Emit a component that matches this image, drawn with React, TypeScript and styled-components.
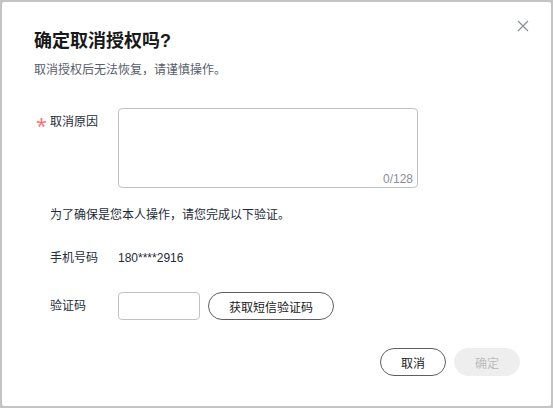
import styled, { createGlobalStyle } from 'styled-components';

const GlobalStyle = createGlobalStyle`
  html, body {
    margin: 0;
    padding: 0;
    background: #c4c4c4;
  }
  body {
    font-family: "Liberation Sans", "Noto Sans CJK SC", sans-serif;
    color: #191919;
  }
`;

const Dialog = styled.section`
  position: relative;
  box-sizing: border-box;
  width: 549px;
  height: 404px;
  margin: 2px;
  padding: 27px 31px 0 32px;
  background: #fff;
  border-radius: 2px;
`;

const CloseButton = styled.button`
  position: absolute;
  top: 17px;
  right: 21px;
  width: 14px;
  height: 14px;
  padding: 0;
  border: 0;
  background: none;
  cursor: pointer;
  display: flex;
  align-items: center;
  justify-content: center;
`;

const Title = styled.h1`
  margin: 0;
  font-size: 18px;
  line-height: 24px;
  font-weight: bold;
  color: #191919;
`;

const Subtitle = styled.p`
  margin: 8px 0 0;
  font-size: 12px;
  line-height: 18px;
  color: #575d6c;
`;

const Form = styled.div`
  display: flex;
  flex-direction: column;
  margin-top: 29px;
`;

const Row = styled.div<{ $gap?: number; $center?: boolean }>`
  display: flex;
  align-items: ${p => (p.$center ? 'center' : 'flex-start')};
  margin-top: ${p => p.$gap ?? 0}px;
`;

const Label = styled.div<{ $top?: number }>`
  box-sizing: border-box;
  width: 84px;
  flex: none;
  padding-left: 16px;
  padding-top: ${p => p.$top ?? 0}px;
  font-size: 12px;
  line-height: 18px;
  color: #252b3a;
`;

const Star = styled.span`
  display: inline-block;
  box-sizing: border-box;
  width: 14px;
  height: 18px;
  margin-left: -14px;
  padding-top: 4px;
  color: #f66f6a;
  font-family: "Open Sans", sans-serif;
  font-size: 20px;
  line-height: 18px;
  vertical-align: top;
`;

const Value = styled.div`
  font-size: 12px;
  line-height: 18px;
  color: #252b3a;
`;

const Note = styled.div<{ $gap?: number }>`
  margin-top: ${p => p.$gap ?? 0}px;
  padding-left: 16px;
  font-size: 12px;
  line-height: 18px;
  color: #252b3a;
`;

const AreaWrap = styled.div`
  position: relative;
  width: 300px;
  height: 80px;
`;

const TextArea = styled.textarea`
  box-sizing: border-box;
  width: 100%;
  height: 100%;
  resize: none;
  border: 1px solid #c2c2c2;
  border-radius: 4px;
  padding: 4px 8px;
  font-family: inherit;
  font-size: 12px;
  outline: none;
`;

const Counter = styled.span`
  position: absolute;
  right: 5px;
  bottom: 1px;
  font-size: 12px;
  line-height: 16px;
  color: #8a8e99;
`;

const Input = styled.input`
  box-sizing: border-box;
  width: 82px;
  height: 28px;
  border: 1px solid #c2c2c2;
  border-radius: 4px;
  padding: 0 8px;
  font-family: inherit;
  font-size: 12px;
  outline: none;
`;

const Button = styled.button<{ $disabled?: boolean; $width?: number }>`
  box-sizing: border-box;
  height: 28px;
  width: ${p => p.$width ?? 66}px;
  padding: 0;
  border-radius: 14px;
  border: 1px solid ${p => (p.$disabled ? '#eeeeee' : '#5e5e5e')};
  background: ${p => (p.$disabled ? '#eeeeee' : '#fff')};
  color: ${p => (p.$disabled ? '#bdbdbd' : '#191919')};
  font-family: inherit;
  font-size: 12px;
  cursor: ${p => (p.$disabled ? 'not-allowed' : 'pointer')};
`;

const SmsButton = styled(Button)`
  margin-left: 8px;
`;

const Footer = styled.div`
  display: flex;
  justify-content: flex-end;
  gap: 8px;
  margin-top: 28px;
`;

export default function App() {
  return (
    <>
      <GlobalStyle />
      <Dialog>
        <CloseButton aria-label="关闭">
          <svg width="12" height="12" viewBox="0 0 12 12">
            <path d="M1 1L11 11M11 1L1 11" stroke="#8a8e99" strokeWidth="1.2" fill="none" />
          </svg>
        </CloseButton>
        <Title>确定取消授权吗?</Title>
        <Subtitle>取消授权后无法恢复，请谨慎操作。</Subtitle>
        <Form>
          <Row>
            <Label $top={5}>
              <Star>*</Star>取消原因
            </Label>
            <AreaWrap>
              <TextArea />
              <Counter>0/128</Counter>
            </AreaWrap>
          </Row>
          <Note $gap={18}>为了确保是您本人操作，请您完成以下验证。</Note>
          <Row $gap={25} $center>
            <Label>手机号码</Label>
            <Value>180****2916</Value>
          </Row>
          <Row $gap={25} $center>
            <Label>验证码</Label>
            <Input />
            <SmsButton $width={126}>获取短信验证码</SmsButton>
          </Row>
        </Form>
        <Footer>
          <Button>取消</Button>
          <Button $disabled>确定</Button>
        </Footer>
      </Dialog>
    </>
  );
}
